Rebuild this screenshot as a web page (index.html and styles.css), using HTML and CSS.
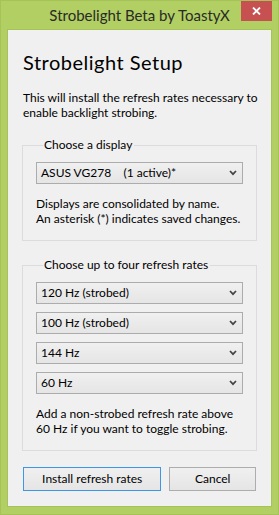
FILE: index.html
```html
<!DOCTYPE html>
<html lang="en">
<head>
    <meta charset="UTF-8">
    <title>Strobelight Beta by ToastyX</title>
    <link rel="stylesheet" href="styles.css">
</head>
<body>
    <div class="window">
        <div class="titlebar">
            <span class="title">Strobelight Beta by ToastyX</span>
            <div class="close-btn">
                <svg width="9" height="8" viewBox="0 0 9 8">
                    <path d="M1 0.5 L8 7.5 M8 0.5 L1 7.5" stroke="#fff" stroke-width="1.8" fill="none"/>
                </svg>
            </div>
        </div>

        <div class="client">
            <h1 class="heading">Strobelight Setup</h1>
            <p class="intro">This will install the refresh rates necessary to<br>enable backlight strobing.</p>

            <fieldset class="group group-display">
                <legend>Choose a display</legend>
                <div class="combo">
                    <span class="combo-text">ASUS VG278&nbsp;&nbsp;&nbsp;&nbsp;(1 active)*</span>
                    <svg class="chevron" width="8" height="6" viewBox="0 0 8 6">
                        <path d="M1 1 L4 4.2 L7 1" stroke="#444" stroke-width="1.7" fill="none"/>
                    </svg>
                </div>
                <p class="hint">Displays are consolidated by name.<br>An asterisk (*) indicates saved changes.</p>
            </fieldset>

            <fieldset class="group group-rates">
                <legend>Choose up to four refresh rates</legend>
                <div class="combo-list">
                    <div class="combo">
                        <span class="combo-text">120 Hz (strobed)</span>
                        <svg class="chevron" width="8" height="6" viewBox="0 0 8 6">
                            <path d="M1 1 L4 4.2 L7 1" stroke="#444" stroke-width="1.7" fill="none"/>
                        </svg>
                    </div>
                    <div class="combo">
                        <span class="combo-text">100 Hz (strobed)</span>
                        <svg class="chevron" width="8" height="6" viewBox="0 0 8 6">
                            <path d="M1 1 L4 4.2 L7 1" stroke="#444" stroke-width="1.7" fill="none"/>
                        </svg>
                    </div>
                    <div class="combo">
                        <span class="combo-text">144 Hz</span>
                        <svg class="chevron" width="8" height="6" viewBox="0 0 8 6">
                            <path d="M1 1 L4 4.2 L7 1" stroke="#444" stroke-width="1.7" fill="none"/>
                        </svg>
                    </div>
                    <div class="combo">
                        <span class="combo-text">60 Hz</span>
                        <svg class="chevron" width="8" height="6" viewBox="0 0 8 6">
                            <path d="M1 1 L4 4.2 L7 1" stroke="#444" stroke-width="1.7" fill="none"/>
                        </svg>
                    </div>
                </div>
                <p class="hint">Add a non-strobed refresh rate above<br>60 Hz if you want to toggle strobing.</p>
            </fieldset>

            <div class="buttons">
                <button class="btn btn-default">Install refresh rates</button>
                <button class="btn btn-cancel">Cancel</button>
            </div>
        </div>
    </div>
</body>
</html>
```

FILE: styles.css
```css
* {
    box-sizing: border-box;
}

body {
    margin: 0;
    width: 279px;
    height: 515px;
    overflow: hidden;
    font-family: Lato, 'Noto Sans', sans-serif;
    color: #000;
}

/* window frame */
.window {
    width: 279px;
    height: 515px;
    background: #b1cf62;
    border: 1px solid #a6c35a;
    display: flex;
    flex-direction: column;
    padding: 0 6px 7px 6px;
}

.titlebar {
    height: 28px;
    display: grid;
    grid-template-columns: 1fr auto 1fr;
    margin: 0 -6px;
}

.title {
    grid-column: 2;
    font-size: 15px;
    line-height: 28px;
    color: #2a2a2a;
    white-space: nowrap;
}

.close-btn {
    grid-column: 3;
    justify-self: end;
    align-self: start;
    width: 31px;
    height: 20px;
    margin-right: 6px;
    background: #c75050;
    display: flex;
    align-items: center;
    justify-content: center;
}

.close-btn svg {
    display: block;
}

/* client area */
.client {
    flex: 1;
    background: #f0f0f0;
    border: 1px solid #a6c35a;
    padding: 0 15px;
    display: flex;
    flex-direction: column;
}

.heading {
    margin: 20px 0 0 0;
    font-size: 20px;
    line-height: 24px;
    font-weight: 400;
    letter-spacing: 0.5px;
    white-space: nowrap;
}

.intro {
    margin: 17px 0 0 0;
    font-size: 12px;
    line-height: 14.5px;
    white-space: nowrap;
}

/* group boxes */
.group {
    margin: 0 -1px 0 -1px;
    border: 1px solid #dcdcdc;
    padding: 11px 13px 14px 13px;
    min-width: 0;
}

.group-display {
    margin-top: 19px;
}

.group-rates {
    margin-top: 18px;
}

.group legend {
    font-size: 12px;
    line-height: 12px;
    padding: 0 2px 0 1px;
    margin-left: 7px;
    white-space: nowrap;
}

.combo-list {
    display: flex;
    flex-direction: column;
    gap: 8px;
}

.combo {
    height: 22px;
    border: 1px solid #acacac;
    background: linear-gradient(#f0f0f0, #e5e5e5);
    display: flex;
    align-items: center;
    justify-content: space-between;
    padding: 0 5px 0 4px;
}

.combo-text {
    font-size: 12px;
    line-height: 20px;
    white-space: nowrap;
}

.chevron {
    display: block;
}

.hint {
    margin: 12px 0 0 0;
    font-size: 12px;
    line-height: 15px;
    white-space: nowrap;
}

/* dialog buttons */
.buttons {
    margin-top: 16px;
    display: flex;
    gap: 8px;
}

.btn {
    height: 24px;
    font-family: inherit;
    font-size: 12px;
    line-height: 20px;
    color: #000;
    background: linear-gradient(#f0f0f0, #e5e5e5);
    border: 1px solid #adadad;
    padding: 0;
    margin: 0;
}

.btn-default {
    width: 139px;
    border-color: #3c97e8;
}

.btn-cancel {
    width: 87px;
}
```
